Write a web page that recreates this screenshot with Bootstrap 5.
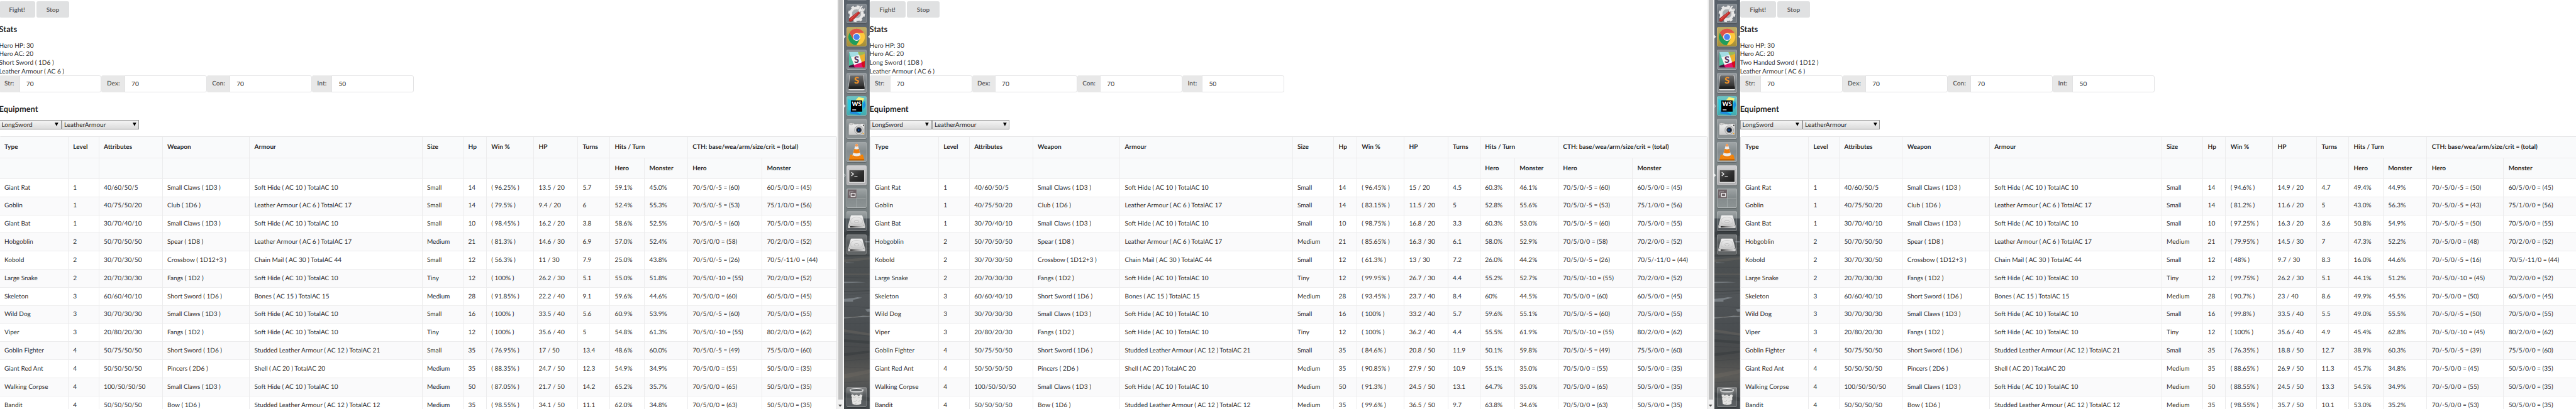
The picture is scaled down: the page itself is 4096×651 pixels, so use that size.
<!DOCTYPE html>
<html lang="en">
<head>
<meta charset="utf-8">
<title>Combat simulator</title>
<link href="https://cdn.jsdelivr.net/npm/bootstrap@5.3.0/dist/css/bootstrap.min.css" rel="stylesheet">
<style>
  /* 1rem = ten design pixels */
  html { font-size: 7.2087px; }
  body { font: 400 1.4rem/1.9rem Lato, "Liberation Sans", sans-serif; color: rgba(0,0,0,.87); background: #fff; text-rendering: geometricPrecision; }
  .screen { height: 651px; }
  .pane { overflow: hidden; height: 651px; flex: none; }
  .pane-a { width: 186.1rem; } .pane-b { width: 186.3rem; } .pane-c { width: 184.4rem; }
  .sheet { flex: none; width: 184.8rem; padding-top: .3rem; }
  .pane-a .sheet { margin-left: -.2rem; }
  .pane-c .sheet { width: 186rem; }
  .btn-sim { --bs-btn-bg: #e0e1e2; --bs-btn-color: rgba(0,0,0,.6); --bs-btn-font-weight: 700; --bs-btn-font-size: 1.4rem; --bs-btn-padding-y: 0; --bs-btn-padding-x: 0; --bs-btn-border-width: 0; --bs-btn-border-radius: .4rem; height: 3.6rem; width: 7.9rem; line-height: 3.5rem; }
  .btn-stop { width: 7.1rem; }
  .btn-pair { gap: .4rem; }
  .sheet h3 { font-size: 1.79rem; line-height: 2.3rem; font-weight: 700; margin: 0; }
  .h-stats { padding-top: 1.4rem; height: 5.35rem; }
  .stat-lines { height: 7.4rem; }
  .field .input-group-text { background: #e8e8e8; border: 0; color: rgba(0,0,0,.6); font-weight: 700; font-size: 1.4rem; line-height: 1.9rem; padding: .1rem 0 0 1.17rem; border-radius: .4rem 0 0 .4rem; width: 4.6rem; }
  .field.wide .input-group-text { width: 5.2rem; }
  .field.thin .input-group-text { width: 4.5rem; }
  .field { width: 22.6rem; height: 3.7rem; } .field.wide { width: 23.2rem; } .field.thin { width: 22.5rem; }
  .field .form-control { font-size: 1.4rem; line-height: 1.9rem; color: rgba(0,0,0,.87); padding: .25rem 1.4rem 0; border: 1px solid #e3e3e4; border-radius: 0 .4rem .4rem 0; min-height: 0; }
  .h-equip { padding-top: 2.55rem; height: 6.2rem; }
  .pick { height: 2.1rem; border: 1px solid #a2a2a2; border-bottom-color: #8e8e8e; border-right-color: #999; background: linear-gradient(#f4f4f4, #dcdcdc); padding: .3rem .5rem 0 .4rem; width: 13.75rem; }
  .pick + .pick { width: 17.1rem; margin-left: .05rem; }
  .pick svg { width: .8rem; height: .8rem; margin-top: -.5rem; }
  .foes { table-layout: fixed; border-collapse: separate; border-spacing: 0; margin: 1.4rem 0 0; border: 1px solid #e2e2e3; border-left-width: 0; border-radius: .4rem; --bs-table-bg: transparent; }
  .foes th, .foes td { height: 4rem; padding: .2rem 0 0 1.02rem; border: 0; border-top: 1px solid #ececed; border-left: 1px solid #ececed; white-space: nowrap; vertical-align: middle; color: rgba(0,0,0,.87); line-height: 1.9rem; box-shadow: none; }
  .foes th { height: 4.6rem; background: #f9fafb; font-weight: 700; }
  .foes thead tr:first-child th { border-top: 0; }
  .foes tbody tr:nth-child(even) td { background: #fafafb; }
  .foes tr > :first-child { border-left-color: #e2e2e3; }
  .scroller { width: 1.45rem; flex: none; background: #f1f1f1; padding: 0 .2rem; height: 651px; }
  .scroller .thumb { background: #c1c1c1; height: 88.2rem; margin-left: .05rem; }
  .scroller svg { width: .8rem; height: .5rem; display: block; margin: 1.2rem auto 0; }
  .dock { width: 5.7rem; height: 651px; flex: none; position: relative; overflow: hidden; }
  .dock .wood { position: absolute; inset: 0; width: 100%; height: 100%; }
  .dock .tiles { position: relative; padding: .8rem 0 0 .6rem; gap: .7rem; height: 100%; }
  .tile { width: 4.45rem; height: 4.4rem; border-radius: .3rem; border: 1px solid rgba(255,255,255,.2); background: linear-gradient(rgba(255,255,255,.28), rgba(255,255,255,.08) 45%, rgba(255,255,255,.15)); box-shadow: 0 1px 1px rgba(0,0,0,.25); flex: none; }
  .tile svg { display: block; width: 4.45rem; height: 4.4rem; margin: -1px; }
  .tile-gold { background: linear-gradient(#bfae68, #a88f35); }
  .tile-teal { background: linear-gradient(#6fc4c4, #43abae); }
  .tile-pale { background: linear-gradient(#cfcfd1, #b2b2b4); }
  .tile-glass { background: linear-gradient(rgba(255,255,255,.3), rgba(255,255,255,.08) 40%, rgba(255,255,255,.12)); }
  .tile-bin { margin-top: 28.6rem; }
</style>
</head>
<body>
<svg class="position-absolute" width="0" height="0" xmlns="http://www.w3.org/2000/svg">
  <defs>
    <linearGradient id="wall" x1="0" y1="0" x2="0" y2="1">
      <stop offset="0" stop-color="#575f68"/><stop offset=".1" stop-color="#626a71"/><stop offset=".24" stop-color="#757c80"/><stop offset=".38" stop-color="#7c8486"/><stop offset=".5" stop-color="#798182"/><stop offset=".533" stop-color="#757d7f"/>
      <stop offset=".535" stop-color="#474f54"/><stop offset=".57" stop-color="#414649"/><stop offset=".61" stop-color="#4d5152"/><stop offset=".68" stop-color="#4b4f51"/><stop offset=".72" stop-color="#515558"/><stop offset=".8" stop-color="#4a4e51"/><stop offset=".87" stop-color="#484a4b"/><stop offset=".92" stop-color="#5c5b58"/><stop offset=".96" stop-color="#4b4f51"/><stop offset="1" stop-color="#43484b"/>
    </linearGradient>
    <linearGradient id="plate" x1="0" y1="0" x2="0" y2="1"><stop offset="0" stop-color="#f2f2f2"/><stop offset="1" stop-color="#c9c9c9"/></linearGradient>
    <linearGradient id="coal" x1="0" y1="0" x2="0" y2="1"><stop offset="0" stop-color="#6e6e6e"/><stop offset="1" stop-color="#303030"/></linearGradient>
    <linearGradient id="night" x1="0" y1="0" x2="1" y2="1"><stop offset="0" stop-color="#5a5a5a"/><stop offset=".5" stop-color="#303030"/><stop offset="1" stop-color="#1f1f1f"/></linearGradient>
    <linearGradient id="edge" x1="0" y1="0" x2="1" y2="0"><stop offset="0" stop-color="#222"/><stop offset=".4" stop-color="#777"/><stop offset="1" stop-color="#ccc"/></linearGradient>
    <clipPath id="mosaic"><rect x="5" y="5" width="35" height="34.5" rx="1"/></clipPath>
  </defs>
  <symbol id="wood" viewBox="0 0 57 903" preserveAspectRatio="none">
    <path fill="url(#wall)" d="M0 0h57v903H0z"/>
    <path fill="#2f3437" opacity=".4" d="M0 512l57-2v10l-57 4zM0 562h57v3l-57 2zM0 643l57-2v2l-57 2zM0 749l57 4v6l-57-4zM0 780l57-6v5l-57 7zM0 866l57 12v8l-57-9z"/>
    <path fill="#6d6862" opacity=".45" d="M0 573l57-5v5l-57 6zM0 604h57v3H0zM0 727l57 9v5l-57-8zM0 826l57-10v8l-57 12zM0 700l57-4v3l-57 4z"/>
    <g fill="#899095" opacity=".7"><path d="M0 622h28l20 1-20 1-28 1zM0 660l20-2 10-2 10 1-10 3-10 2v4H0zM0 701l20 0 22-4 15 1v1l-30 2-27 2zM47 683l10-1v6h-6zM46 532l11 1v2H46zM4 579l18 1v1H4z"/></g>
    <g stroke="#2b3034" stroke-width=".7" opacity=".35" fill="none"><path d="M0 545h57M0 553l57-2M0 590h57M0 612l57 2M0 634h57M0 651l57-3M0 676l57 3M0 715l57-2M0 738l57 4M0 765l57 2M0 797l57-5M0 810l57 3M0 845l57-4M0 857l57 2"/></g>
    <path fill="#aab0b4" opacity=".4" d="M56 0h1v903h-1z"/>
    <path fill="#fff" opacity=".3" d="M7 0h43q-1 1-2 1H9q-1 0-2-1z"/>
  </symbol>
  <symbol id="i-gear" viewBox="0 0 44 44">
    <circle cx="22" cy="22" r="12.8" fill="none" stroke="#e6e6e6" stroke-width="6"/>
    <circle cx="22" cy="22" r="16.6" fill="none" stroke="#e6e6e6" stroke-width="4" stroke-dasharray="6.5 6.54"/>
    <circle cx="22" cy="22" r="9.8" fill="#a9adb0" stroke="#ccc" stroke-width=".6"/>
    <path d="M25 17l4-9q3-5 7-3l-4 5 1 3 3 1 4-5q1 5-3 7-4 2-7 0l-3 4z" fill="#ededed" stroke="#888" stroke-width=".5"/>
    <path d="M26 17l3.5 3.5L13 37q-3 3-6 2t-1-5q0-2 3-4z" fill="#c62f2d" stroke="#7c1514" stroke-width=".6"/>
    <path d="M25 19L9 34" stroke="#e8736f" stroke-width="1.2"/>
  </symbol>
  <symbol id="i-chrome" viewBox="0 0 44 44">
    <circle cx="22" cy="22" r="18.3" fill="#fdc93c"/>
    <path d="M22 22L6.2 12.8A18.3 18.3 0 0 1 37.8 12.8H22z" fill="#dd5347"/>
    <path d="M22 13h15.9A18.3 18.3 0 0 0 6.2 12.8l8 13.8z" fill="#dd5347"/>
    <path d="M6.2 12.8A18.3 18.3 0 0 0 21.5 40.3l8.3-13.9-8 4-8-4.4z" fill="#1f9d5c"/>
    <circle cx="22" cy="22" r="8.4" fill="#f1f1f1"/><circle cx="22" cy="22" r="6.7" fill="#4a84ee"/>
  </symbol>
  <symbol id="i-slack" viewBox="0 0 44 44">
    <g clip-path="url(#mosaic)"><path fill="#a3dde4" d="M5 5h22l4 8-20 9z"/><path fill="#4ec0a6" d="M5 5l6 17-6 4z"/><path fill="#9cb958" d="M25 5h15v6l-12 5z"/><path fill="#ecb32d" d="M28 14l12-5v18l-6 3z"/><path fill="#4ec0a0" d="M5 23l6-3 7 14-13 5z"/><path fill="#43123b" d="M5 36l11-4 3 8H5z"/><path fill="#e5146a" d="M15 33l18-6 6 13H18z"/><path fill="#d40f1c" d="M32 28l8-3v15h-4z"/><path fill="#f4f4f4" d="M10 17.5l17.500-6.500 6 17-17 6z"/></g>
    <text x="22" y="29" text-anchor="middle" font-family="Lato" font-weight="900" font-size="20" fill="#56315a">S</text>
  </symbol>
  <symbol id="i-sublime" viewBox="0 0 44 44">
    <path d="M6 7q0-2 2-2h28q2 0 2 2l2 28q0 3-3 3H7q-3 0-3-3z" fill="#e8e8e8"/>
    <path d="M5 28h34l1 6q0 2-2 2H6q-2 0-2-2z" fill="#222"/>
    <path d="M7 7q0-1.500 1.500-1.500h27q1.500 0 1.500 1.500l2 21q0 2-2 2H7q-2 0-2-2z" fill="url(#coal)"/>
    <text x="22" y="24" text-anchor="middle" font-family="Lato" font-weight="900" font-size="20" fill="#f39325">S</text>
  </symbol>
  <symbol id="i-ws" viewBox="0 0 44 44">
    <path fill="#24c9e0" d="M3 7l9 2h24l6 9-3 12-27 2-8-1z"/><path fill="#f6f07d" d="M20 9l6-7 13 3-5 10z"/><path fill="#1f8bdc" d="M36 18l4-8 2 10-5 10zM8 30l-1 8 23 4 3-8z"/><path fill="#19d7ee" d="M20 34h17l-8 5z"/>
    <path d="M9.500 9.500h25v25h-25z"/><text x="22" y="22.500" text-anchor="middle" font-family="Lato" font-weight="900" font-size="14" fill="#fff" textLength="21" lengthAdjust="spacingAndGlyphs">WS</text><path fill="#fff" d="M12.500 29.500H21v1.800h-8.500z"/>
  </symbol>
  <symbol id="i-camera" viewBox="0 0 44 44">
    <path d="M5 12q0-2 2-2h8l2 1h20q2 0 2.500 2V34q0 2-2 2H7q-2.500 0-2.500-2z" fill="url(#plate)" stroke="#999" stroke-width=".6"/>
    <ellipse cx="10" cy="11.500" rx="4.500" ry="2.200" fill="#d8d8d8" stroke="#888" stroke-width=".7"/><path d="M17 12h15" stroke="#777" stroke-width="1.200" stroke-dasharray="1.500 1"/>
    <circle cx="27" cy="25" r="9.500" fill="#d4d4d4" stroke="#888" stroke-width="1"/><circle cx="27" cy="25" r="6.800" fill="#4a4c50" stroke="#eee" stroke-width=".9"/><circle cx="27" cy="25" r="4.200" fill="#121c30"/><circle cx="26.500" cy="25" r="1.900" fill="#1f5fa8"/>
    <circle cx="37" cy="14.500" r="1.300" fill="#222"/><circle cx="36.500" cy="32.500" r="1.400" fill="#f0a020"/>
  </symbol>
  <symbol id="i-vlc" viewBox="0 0 44 44">
    <path d="M8 28h28l3 11q0 1.500-1.500 1.500h-31Q5 40.500 5.500 39z" fill="#f28208"/><path d="M5.500 37.500h33l.3 3H5.500z" fill="#c96500"/>
    <path d="M20 4.500q2-1.500 4 0l8 28q-10 6-20 0z" fill="#ececec"/>
    <path d="M20 4.500q2-1.500 4 0l1.400 5q-3.400 1.500-6.800 0z" fill="#f39a55"/><path d="M17 15q5 2.500 10 0l2.400 8.500q-7.400 3.500-14.800 0z" fill="#ee7d0c"/><path d="M13.200 29q8.800 5 17.600 0l1.400 4q-10.200 6-20.400 0z" fill="#ee7d0c"/>
  </symbol>
  <symbol id="i-term" viewBox="0 0 44 44">
    <rect x="4" y="9" width="37" height="30" rx="1.500" fill="#ececec" stroke="#8d8d8d" stroke-width=".7"/><rect x="6.500" y="11.500" width="32" height="25" fill="url(#night)" stroke="#111" stroke-width=".6"/>
    <path d="M10.500 15.500l4.500 4-4.500 4" fill="none" stroke="#fff" stroke-width="1.700"/><path d="M17 25h7" stroke="#fff" stroke-width="1.500"/>
  </symbol>
  <symbol id="i-spaces" viewBox="0 0 44 44">
    <path fill="#6f6468" d="M2.500 2.500H22V22H2.500z"/><path stroke="#b4b9ba" stroke-width=".9" d="M22.500 3v39M3 22.500h39"/>
    <path d="M6 15V7.500h9" fill="none" stroke="#a5a0a3" stroke-width="1.500"/><rect x="9.800" y="10.800" width="9" height="6.800" fill="#6f6468" stroke="#fff" stroke-width="1.600"/>
  </symbol>
  <symbol id="i-disk" viewBox="0 0 44 44">
    <path d="M3 32h38v4q0 1.500-1.500 1.500h-35Q3 37.500 3 36z" fill="#d2d2d2"/><path d="M8 33h28v3.500H8z" fill="url(#edge)"/>
    <path d="M9 11q.3-1.500 2-1.500h22q1.700 0 2 1.500l6 21.500H3z" fill="url(#plate)"/>
    <path d="M9 26q-2-12 13-13 15 1 13 13-13 9-26 0z" fill="none" stroke="#bdbdbd" stroke-width=".9"/><ellipse cx="22" cy="23" rx="4.800" ry="2.600" fill="#e3e3e3" stroke="#a5a5a5" stroke-width=".9"/>
    <circle cx="6" cy="31" r=".9" fill="#888"/><circle cx="38" cy="31" r=".9" fill="#888"/>
  </symbol>
  <symbol id="i-bin" viewBox="0 0 44 44">
    <path d="M8.500 9l3.500 29q10 4.500 20 0L36 9z" fill="#fff" opacity=".17"/>
    <path d="M10 19l3-3 4 3 5-2 5 3 4-4 4 3-2 5 1 3-2 3 0 7q-10 5-19 0l-1-8-1-3 1-3z" fill="#e3e3e1"/><path d="M14 22l4 2 3-3M24 24l5-1M15 31l4 1 3-3M25 32l5-2M18 38l4-2" stroke="#b9bab6" stroke-width="1.200" fill="none"/>
    <path d="M7.500 6v4.500q14.500 5 29 0V6z" fill="#cfd1d1" opacity=".6"/><ellipse cx="22" cy="6.500" rx="14.500" ry="3" fill="#5e6264" stroke="#eee" stroke-width="1.400"/>
  </symbol>
</svg>

<main class="screen d-flex overflow-hidden" id="screen"></main>

<template id="paneTpl">
  <section class="pane d-flex">
    <div class="sheet">
      <div class="d-flex btn-pair"><button class="btn btn-sim" type="button">Fight!</button><button class="btn btn-sim btn-stop" type="button">Stop</button></div>
      <h3 class="h-stats">Stats</h3>
      <div class="stat-lines"><div>Hero HP: 30</div><div>Hero AC: 20</div><div class="weapon"></div><div>Leather Armour ( AC 6 )</div></div>
      <div class="d-flex">
        <div class="input-group flex-nowrap field"><span class="input-group-text">Str:</span><input class="form-control" value="70"></div>
        <div class="input-group flex-nowrap field wide"><span class="input-group-text">Dex:</span><input class="form-control" value="70"></div>
        <div class="input-group flex-nowrap field wide"><span class="input-group-text">Con:</span><input class="form-control" value="70"></div>
        <div class="input-group flex-nowrap field thin"><span class="input-group-text">Int:</span><input class="form-control" value="50"></div>
      </div>
      <h3 class="h-equip">Equipment</h3>
      <div class="d-flex">
        <div class="pick d-flex align-items-center justify-content-between">LongSword<svg viewBox="0 0 8 8"><path d="M0 .5h8L4 8z"/></svg></div>
        <div class="pick d-flex align-items-center justify-content-between">LeatherArmour<svg viewBox="0 0 8 8"><path d="M0 .5h8L4 8z"/></svg></div>
      </div>
      <table class="table foes">
        <colgroup></colgroup>
        <thead>
          <tr><th>Type</th><th>Level</th><th>Attributes</th><th>Weapon</th><th>Armour</th><th>Size</th><th>Hp</th><th>Win %</th><th>HP</th><th>Turns</th><th colspan="2">Hits / Turn</th><th colspan="2">CTH: base/wea/arm/size/crit = (total)</th></tr>
          <tr><th></th><th></th><th></th><th></th><th></th><th></th><th></th><th></th><th></th><th></th><th>Hero</th><th>Monster</th><th>Hero</th><th>Monster</th></tr>
        </thead>
        <tbody></tbody>
      </table>
    </div>
    <div class="scroller"><div class="thumb"></div><svg viewBox="0 0 8 5"><path fill="#505050" d="M0 0h8L4 5z"/></svg></div>
  </section>
</template>

<template id="dockTpl">
  <aside class="dock">
    <svg class="wood"><use href="#wood"/></svg>
    <div class="tiles d-flex flex-column">
      <div class="tile"><svg><use href="#i-gear"/></svg></div>
      <div class="tile tile-gold"><svg><use href="#i-chrome"/></svg></div>
      <div class="tile"><svg><use href="#i-slack"/></svg></div>
      <div class="tile"><svg><use href="#i-sublime"/></svg></div>
      <div class="tile tile-teal"><svg><use href="#i-ws"/></svg></div>
      <div class="tile"><svg><use href="#i-camera"/></svg></div>
      <div class="tile"><svg><use href="#i-vlc"/></svg></div>
      <div class="tile tile-pale"><svg><use href="#i-term"/></svg></div>
      <div class="tile"><svg><use href="#i-spaces"/></svg></div>
      <div class="tile tile-glass"><svg><use href="#i-disk"/></svg></div>
      <div class="tile tile-glass"><svg><use href="#i-disk"/></svg></div>
      <div class="tile tile-glass tile-bin"><svg><use href="#i-bin"/></svg></div>
    </div>
    <svg class="wood" viewBox="0 0 57 903" preserveAspectRatio="none" fill="#dfe2e3" stroke="#dfe2e3" stroke-width=".8">
      <path d="M0 78l3.500 3-3.500 3zM57 78l-4 3 4 3z"/><path class="m-ws" d="M0 231l3.500 3-3.500 3z"/><path class="m-term" d="M0 384l3.500 3-3.500 3z"/>
    </svg>
  </aside>
</template>

<script>
  const foes = [
    ['Giant Rat','1','40/60/50/5','Small Claws ( 1D3 )','Soft Hide ( AC 10 ) TotalAC 10','Small','14'],
    ['Goblin','1','40/75/50/20','Club ( 1D6 )','Leather Armour ( AC 6 ) TotalAC 17','Small','14'],
    ['Giant Bat','1','30/70/40/10','Small Claws ( 1D3 )','Soft Hide ( AC 10 ) TotalAC 10','Small','10'],
    ['Hobgoblin','2','50/70/50/50','Spear ( 1D8 )','Leather Armour ( AC 6 ) TotalAC 17','Medium','21'],
    ['Kobold','2','30/70/30/50','Crossbow ( 1D12+3 )','Chain Mail ( AC 30 ) TotalAC 44','Small','12'],
    ['Large Snake','2','20/70/30/30','Fangs ( 1D2 )','Soft Hide ( AC 10 ) TotalAC 10','Tiny','12'],
    ['Skeleton','3','60/60/40/10','Short Sword ( 1D6 )','Bones ( AC 15 ) TotalAC 15','Medium','28'],
    ['Wild Dog','3','30/70/30/30','Small Claws ( 1D3 )','Soft Hide ( AC 10 ) TotalAC 10','Small','16'],
    ['Viper','3','20/80/20/30','Fangs ( 1D2 )','Soft Hide ( AC 10 ) TotalAC 10','Tiny','12'],
    ['Goblin Fighter','4','50/75/50/50','Short Sword ( 1D6 )','Studded Leather Armour ( AC 12 ) TotalAC 21','Small','35'],
    ['Giant Red Ant','4','50/50/50/50','Pincers ( 2D6 )','Shell ( AC 20 ) TotalAC 20','Medium','35'],
    ['Walking Corpse','4','100/50/50/50','Small Claws ( 1D3 )','Soft Hide ( AC 10 ) TotalAC 10','Medium','50'],
    ['Bandit','4','50/50/50/50','Bow ( 1D6 )','Studded Leather Armour ( AC 12 ) TotalAC 12','Medium','35']
  ];
  const monsterCth = ['60/5/0/0 = (45)','75/1/0/0 = (56)','70/5/0/0 = (55)','70/2/0/0 = (52)','70/5/-11/0 = (44)','70/2/0/0 = (52)','60/5/0/0 = (45)','70/5/0/0 = (55)','80/2/0/0 = (62)','75/5/0/0 = (60)','50/5/0/0 = (35)','50/5/0/0 = (35)','50/5/0/0 = (35)'];
  const sizeMod = ['-5','-5','-5','0','-5','-10','0','-5','-10','-5','0','0','0'];
  const heroTotal = [60,53,60,58,26,55,60,60,55,49,55,65,63];
  /* win, hp left / max, turns, hero hits, monster hits */
  const runs = [
    { cls: 'pane-a', weapon: 'Short Sword ( 1D6 )', mod: 5, edges: [0,151.7,219.5,359.5,551.5,932.3,1023.3,1074.2,1178.6,1275.6,1346.6,1423,1518.2,1682.2,1847.6], rows: [
      '96.25|13.5 / 20|5.7|59.1|45.0','79.5|9.4 / 20|6|52.4|55.3','98.45|16.2 / 20|3.8|58.6|52.5','81.3|14.6 / 30|6.9|57.0|52.4','56.3|11 / 30|7.9|25.0|43.8','100|26.2 / 30|5.1|55.0|51.8','91.85|22.2 / 40|9.1|59.6|44.6','100|33.5 / 40|5.6|60.9|53.9','100|35.6 / 40|5|54.8|61.3','76.95|17 / 50|13.4|48.6|60.0','88.35|24.7 / 50|12.3|54.9|34.9','87.05|21.7 / 50|14.2|65.2|35.7','98.55|34.1 / 50|11.1|62.0|34.8'] },
    { cls: 'pane-b', weapon: 'Long Sword ( 1D8 )', mod: 5, edges: [0,151.6,219.5,359.5,551.5,932.2,1023.3,1074.2,1178.6,1275.1,1346,1422.4,1518.2,1682.2,1847.6], rows: [
      '96.45|15 / 20|4.5|60.3|46.1','83.15|11.5 / 20|5|52.8|55.6','98.75|16.8 / 20|3.3|60.3|53.0','85.65|16.3 / 30|6.1|58.0|52.9','61.3|13 / 30|7.2|26.0|44.2','99.95|26.7 / 30|4.4|55.2|52.7','93.45|23.7 / 40|8.4|60|44.5','100|33.2 / 40|5.7|59.6|55.1','100|36.2 / 40|4.4|55.5|61.9','84.6|20.8 / 50|11.9|50.1|59.8','90.85|27.9 / 50|10.9|55.1|35.0','91.3|24.5 / 50|13.1|64.7|35.0','99.6|36.5 / 50|9.7|63.8|34.6'] },
    { cls: 'pane-c', weapon: 'Two Handed Sword ( 1D12 )', mod: -5, edges: [0,150.4,218.5,357.6,549.6,929.6,1020.5,1070.6,1174.5,1271.6,1342.4,1418.2,1514.6,1683.7,1850], rows: [
      '94.6|14.9 / 20|4.7|49.4|44.9','81.2|11.6 / 20|5|43.0|56.3','97.25|16.3 / 20|3.6|50.8|54.9','79.95|14.5 / 30|7|47.3|52.2','48|9.7 / 30|8.3|16.0|44.6','99.75|26.2 / 30|5.1|44.1|51.2','90.7|23 / 40|8.6|49.9|45.5','99.8|33.5 / 40|5.5|49.0|55.5','100|35.6 / 40|4.9|45.4|62.8','76.35|18.8 / 50|12.7|38.9|60.3','88.65|26.9 / 50|11.3|45.7|34.8','88.55|24.5 / 50|13.3|54.5|34.9','98.55|35.7 / 50|10.1|53.0|35.2'] }
  ];
  const screenEl = document.getElementById('screen');
  runs.forEach((run, n) => {
    if (n) {
      const dock = document.getElementById('dockTpl').content.cloneNode(true);
      dock.querySelector(n === 1 ? '.m-term' : '.m-ws').setAttribute('fill', 'none');
      screenEl.append(dock);
    }
    const pane = document.getElementById('paneTpl').content.cloneNode(true);
    pane.querySelector('.pane').classList.add(run.cls);
    pane.querySelector('.weapon').textContent = run.weapon;
    pane.querySelector('.foes').style.width = run.edges[14] / 10 + 'rem';
    run.edges.slice(1).forEach((e, i) => {
      const col = document.createElement('col');
      col.style.width = (e - run.edges[i]) / 10 + 'rem';
      pane.querySelector('colgroup').append(col);
    });
    foes.forEach((foe, i) => {
      const [win, hp, turns, hero, monster] = run.rows[i].split('|');
      const total = heroTotal[i] - (run.mod < 0 ? 10 : 0);
      const tr = document.createElement('tr');
      [...foe, `( ${win}% )`, hp, turns, hero + '%', monster + '%', `70/${run.mod}/0/${sizeMod[i]} = (${total})`, monsterCth[i]].forEach(t => {
        const td = document.createElement('td'); td.textContent = t; tr.append(td);
      });
      pane.querySelector('tbody').append(tr);
    });
    screenEl.append(pane);
  });
</script>
<script src="https://cdn.jsdelivr.net/npm/bootstrap@5.3.0/dist/js/bootstrap.bundle.min.js"></script>
</body>
</html>
